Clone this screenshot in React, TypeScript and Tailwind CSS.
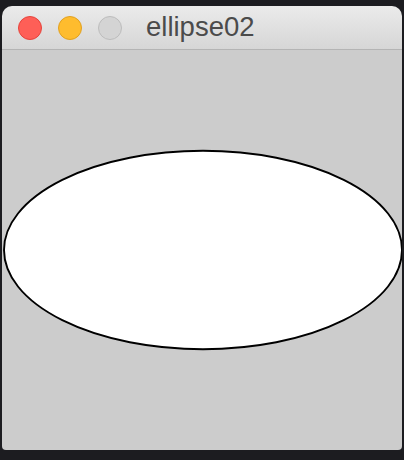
import React from "react";

export default function App() {
  return (
    <div className="w-[404px] h-[460px] bg-[#1c1c20] pt-[6px] px-[2px] overflow-hidden">
      <div className="w-[400px] rounded-t-[10px] rounded-b-[4px] overflow-hidden">
        <div className="h-[44px] bg-gradient-to-b from-[#ebebeb] to-[#d6d6d6] border-b border-[#b4b4b4] flex items-center pl-[16px]">
          <div className="flex items-center gap-[16px]">
            <div className="w-[24px] h-[24px] rounded-full bg-[#fe5f57] border border-[#e5443c]" />
            <div className="w-[24px] h-[24px] rounded-full bg-[#febc2e] border border-[#e0a020]" />
            <div className="w-[24px] h-[24px] rounded-full bg-[#d4d4d4] border border-[#bcbcbc]" />
          </div>
          <span
            className="ml-[24px] text-[27.5px] leading-none text-[#4b4b4b] pb-[1px]"
            style={{ fontFamily: '"Liberation Sans", Arial, sans-serif' }}
          >
            ellipse02
          </span>
        </div>
        <div className="h-[400px] bg-[#cccccc]">
          <svg width="400" height="400" viewBox="0 0 400 400" className="block">
            <ellipse cx="201" cy="200" rx="199" ry="99.2" fill="#ffffff" stroke="#000000" strokeWidth="1.9" />
          </svg>
        </div>
      </div>
    </div>
  );
}
